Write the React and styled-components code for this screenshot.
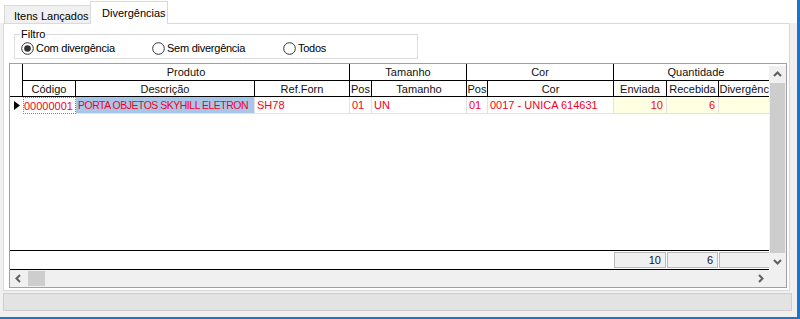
import React from 'react';
import styled, { createGlobalStyle, css } from 'styled-components';

const GlobalStyle = createGlobalStyle`
  html, body { margin: 0; padding: 0; background: #f0f0f0; }
  body { font-family: "Liberation Sans", Arial, sans-serif; font-size: 11px; color: #000; }
  * { box-sizing: border-box; }
`;

const COLS = '13px 53px 179px 95px 22px 95px 21px 126px 53px 52px 60px';
const RED = '#f5001e';

const Window = styled.div`
  width: 800px;
  height: 319px;
  display: flex;
  flex-direction: column;
  background: #f0f0f0;
  border-right: 3px solid #1c75cc;
  border-bottom: 2px solid #1c75cc;
  overflow: hidden;
`;

const TabStrip = styled.div`
  height: 23px;
  flex: none;
  display: flex;
  align-items: flex-end;
  padding-left: 4px;
  background: #ffffff;
`;

const Tab = styled.div`
  width: ${(p) => p.$w}px;
  height: 18px;
  border: 1px solid #d9d9d9;
  border-bottom: none;
  background: #f0f0f0;
  display: flex;
  align-items: center;
  padding: 2px 0 0 ${(p) => p.$pad}px;
  font-size: 11px;
  white-space: nowrap;
  ${(p) =>
    p.$active &&
    css`
      height: 23px;
      margin-bottom: -1px;
      margin-left: -1px;
      background: #ffffff;
      position: relative;
      z-index: 1;
      padding-top: 0;
    `}
`;

const Panel = styled.div`
  margin-left: 3px;
  width: 787px;
  height: 268px;
  flex: none;
  background: #ffffff;
  border: 1px solid #d9d9d9;
  padding: 0 2px 2px 5px;
  display: flex;
  flex-direction: column;
`;

const FilterBox = styled.fieldset`
  margin: 4px 0 0 5px;
  width: 404px;
  min-width: 0;
  border: 1px solid #dcdcdc;
  padding: 0 0 3px 6px;
`;

const Legend = styled.legend`
  padding: 0 1px;
  margin-left: -1px;
  line-height: 13px;
  font-size: 11px;
`;

const RadioRow = styled.div`
  display: grid;
  grid-template-columns: repeat(3, 131px);
  height: 14px;
  align-items: center;
`;

const RadioItem = styled.label`
  display: flex;
  align-items: center;
  gap: 2px;
  font-size: 11px;
  letter-spacing: -0.25px;
  white-space: nowrap;
`;

const Radio = ({ checked, children }) => (
  <RadioItem>
    <svg width="13" height="13" viewBox="0 0 13 13">
      <circle cx="6.5" cy="6.5" r="5.8" fill="#fff" stroke="#333" strokeWidth="1" />
      {checked && <circle cx="6.5" cy="6.5" r="3.3" fill="#333" />}
    </svg>
    <span>{children}</span>
  </RadioItem>
);

const GridFrame = styled.div`
  margin-top: 4px;
  width: 778px;
  height: 225px;
  border: 1px solid #a0a0a0;
  background: #ffffff;
  display: grid;
  grid-template-columns: 759px 17px;
  grid-template-rows: 206px 17px;
`;

const TableArea = styled.div`
  overflow: hidden;
  display: flex;
  flex-direction: column;
`;

const HeaderGrid = styled.div`
  display: grid;
  grid-template-columns: ${COLS};
  grid-template-rows: 17px 16px;
  width: 771px;
  flex: none;
`;

const HeadCell = styled.div`
  grid-column: ${(p) => p.$col};
  grid-row: ${(p) => p.$row};
  border-right: 1px solid #000;
  border-bottom: 1px solid #000;
  display: flex;
  align-items: center;
  justify-content: center;
  white-space: nowrap;
  overflow: hidden;
  color: #111;
`;

const RowGrid = styled.div`
  display: grid;
  grid-template-columns: ${COLS};
  height: 17px;
  width: 771px;
  flex: none;
`;

const DataCell = styled.div`
  border-right: 1px solid #e2e2e2;
  border-bottom: 1px solid #e2e2e2;
  background: ${(p) => p.$bg || 'transparent'};
  color: ${RED};
  display: flex;
  align-items: center;
  justify-content: ${(p) => (p.$right ? 'flex-end' : 'flex-start')};
  padding: 0 ${(p) => (p.$right ? '3px' : '0')} 0 ${(p) => (p.$right ? '0' : '2px')};
  white-space: nowrap;
  overflow: hidden;
  ${(p) =>
    p.$tight &&
    css`
      font-size: 10.5px;
      letter-spacing: -0.5px;
    `}
  ${(p) =>
    p.$focus &&
    css`
      border: 1px dotted #d97400;
      padding-left: 0;
    `}
`;

const IndicatorCell = styled.div`
  display: flex;
  align-items: center;
`;

const Filler = styled.div`
  flex: 1;
`;

const FooterGrid = styled.div`
  display: grid;
  grid-template-columns: ${COLS};
  width: 771px;
  height: 20px;
  flex: none;
  border-top: 1px solid #000;
  border-bottom: 1px solid #000;
  padding-top: 1px;
`;

const TotalCell = styled.div`
  grid-column: ${(p) => p.$col};
  height: 16px;
  margin-right: 1px;
  border: 1px solid #b9b9b9;
  background: #f0f0f0;
  display: flex;
  align-items: center;
  justify-content: flex-end;
  padding-right: 4px;
  color: #101030;
  overflow: hidden;
`;

const VScroll = styled.div`
  margin-top: 2px;
  background: #f0f0f0;
  display: flex;
  flex-direction: column;
`;

const ScrollButton = styled.div`
  width: 17px;
  height: 17px;
  flex: none;
  display: flex;
  align-items: center;
  justify-content: center;
`;

const VThumb = styled.div`
  flex: 1;
  margin: 0 1px;
  background: #cdcdcd;
`;

const HScroll = styled.div`
  background: #f0f0f0;
  display: flex;
  align-items: stretch;
`;

const HThumb = styled.div`
  width: 17px;
  margin: 1px 0 1px 1px;
  background: #cdcdcd;
`;

const HTrack = styled.div`
  flex: 1;
`;

const Corner = styled.div`
  background: #f0f0f0;
`;

const StatusBar = styled.div`
  margin: 2px 0 0 3px;
  width: 789px;
  height: 18px;
  flex: none;
  background: #e3e3e3;
  border: 1px solid #cdcdcd;
`;

const CHEVRONS = {
  up: '5,10 8.5,6.5 12,10',
  down: '5,7 8.5,10.5 12,7',
  left: '10,5 6.5,8.5 10,12',
  right: '7,5 10.5,8.5 7,12',
};

const Chevron = ({ dir }) => (
  <svg width="17" height="17" viewBox="0 0 17 17">
    <polyline points={CHEVRONS[dir]} fill="none" stroke="#606060" strokeWidth="2" />
  </svg>
);

const groups = [
  { label: 'Produto', col: '2 / 5' },
  { label: 'Tamanho', col: '5 / 7' },
  { label: 'Cor', col: '7 / 9' },
  { label: 'Quantidade', col: '9 / 12' },
];

const columns = [
  'Código',
  'Descrição',
  'Ref.Forn',
  'Pos',
  'Tamanho',
  'Pos',
  'Cor',
  'Enviada',
  'Recebida',
  'Divergência',
];

const YELLOW = '#ffffe1';

export default function App() {
  return (
    <>
      <GlobalStyle />
      <Window>
        <TabStrip>
          <Tab $w={87} $pad={9}>Itens Lançados</Tab>
          <Tab $w={78} $pad={11} $active>Divergências</Tab>
        </TabStrip>
        <Panel>
          <FilterBox>
            <Legend>Filtro</Legend>
            <RadioRow>
              <Radio checked>Com divergência</Radio>
              <Radio>Sem divergência</Radio>
              <Radio>Todos</Radio>
            </RadioRow>
          </FilterBox>
          <GridFrame>
            <TableArea>
              <HeaderGrid>
                <HeadCell $col="1 / 2" $row="1 / 3" />
                {groups.map((g) => (
                  <HeadCell key={g.label} $col={g.col} $row="1 / 2">
                    {g.label}
                  </HeadCell>
                ))}
                {columns.map((c, i) => (
                  <HeadCell key={i} $col={`${i + 2} / ${i + 3}`} $row="2 / 3">
                    {c}
                  </HeadCell>
                ))}
              </HeaderGrid>
              <RowGrid>
                <IndicatorCell>
                  <svg width="13" height="16" viewBox="0 0 13 16">
                    <polygon points="4,3 10,7.5 4,12" fill="#000" />
                  </svg>
                </IndicatorCell>
                <DataCell $focus>00000001</DataCell>
                <DataCell $bg="#a8c6e8" $tight>PORTA OBJETOS SKYHILL ELETRON</DataCell>
                <DataCell>SH78</DataCell>
                <DataCell>01</DataCell>
                <DataCell>UN</DataCell>
                <DataCell>01</DataCell>
                <DataCell>0017 - UNICA 614631</DataCell>
                <DataCell $bg={YELLOW} $right>10</DataCell>
                <DataCell $bg={YELLOW} $right>6</DataCell>
                <DataCell $bg={YELLOW} $right />
              </RowGrid>
              <Filler />
              <FooterGrid>
                <TotalCell $col="9 / 10">10</TotalCell>
                <TotalCell $col="10 / 11">6</TotalCell>
                <TotalCell $col="11 / 12" />
              </FooterGrid>
            </TableArea>
            <VScroll>
              <ScrollButton>
                <Chevron dir="up" />
              </ScrollButton>
              <VThumb />
              <ScrollButton>
                <Chevron dir="down" />
              </ScrollButton>
            </VScroll>
            <HScroll>
              <ScrollButton>
                <Chevron dir="left" />
              </ScrollButton>
              <HThumb />
              <HTrack />
              <ScrollButton>
                <Chevron dir="right" />
              </ScrollButton>
            </HScroll>
            <Corner />
          </GridFrame>
        </Panel>
        <StatusBar />
      </Window>
    </>
  );
}
